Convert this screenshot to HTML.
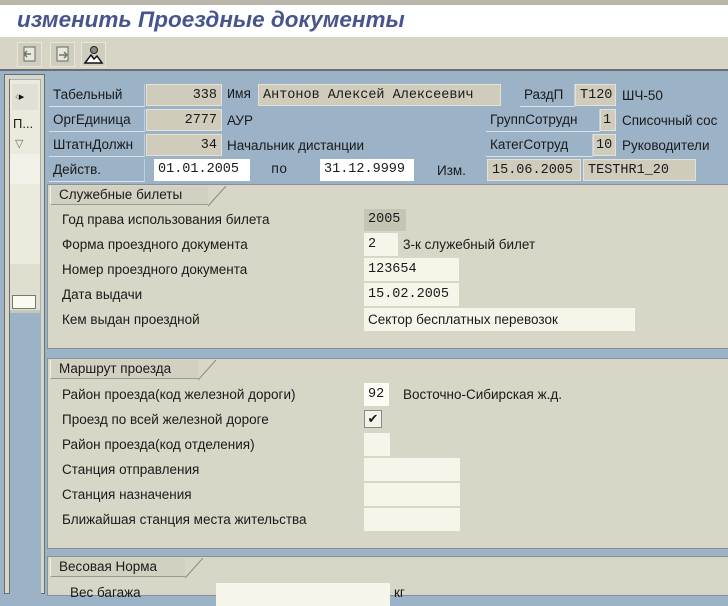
<!DOCTYPE html>
<html><head><meta charset="utf-8"><style>
*{margin:0;padding:0;box-sizing:border-box}
body{width:728px;height:594px;overflow:hidden;background:#9cb2c6;position:relative;font-family:"Liberation Sans","DejaVu Sans",sans-serif;font-size:13.5px;color:#1a1a1a}
.a{position:absolute;white-space:nowrap}
.m{font-family:"Liberation Mono","DejaVu Sans Mono",monospace;font-size:13.5px}
.lbl{position:absolute;height:23px;line-height:22px;padding-left:4px;border-bottom:1px solid #d8e2ea;border-right:1px solid #c0cfdb}
.g{position:absolute;background:#cfccbc;height:22px;line-height:22px;padding:0 4px;border:1px solid #e4e2d6}
.w{position:absolute;background:#fbfaf0;height:22px;line-height:22px;padding:0 4px}
.wg{position:absolute;background:#f7f5ea;height:23px;line-height:23px;padding:0 4px}
.grp{position:absolute;left:47px;right:0;background:#d8d6c6;border:1px solid #8a9098;border-right:none}
.tab{position:absolute;left:2px;top:1px;height:19px;line-height:18px;padding-left:8px;background:#d2d0c0;border-bottom:1px solid #9a9a90;border-left:1px solid #f0efe6}
.sl{position:absolute;top:1px}
.row{position:absolute;left:14px;white-space:nowrap}
</style></head><body>
<div class="a" style="left:0;top:0;width:728px;height:5px;background:#b8b6a8"></div>
<div class="a" style="left:0;top:5px;width:728px;height:32px;background:#fff"></div>
<div class="a" style="left:17px;top:7px;font-size:22.5px;font-weight:bold;font-style:italic;color:#47558f">изменить Проездные документы</div>
<div class="a" style="left:0;top:37px;width:728px;height:34px;background:#d7d5c6;border-bottom:2px solid #6a6e72"></div>
<div class="a" style="left:17px;top:42px;width:25px;height:25px;background:#cfcdbd;border:1px solid #e8e6da"><svg width="23" height="23"><rect x="6" y="4" width="11" height="14" fill="#e8e8e0" stroke="#6a6a60"/><path d="M6 11h7M6 11l3-3M6 11l3 3" stroke="#6a7a60" stroke-width="1.5" fill="none"/></svg></div>
<div class="a" style="left:50px;top:42px;width:25px;height:25px;background:#cfcdbd;border:1px solid #e8e6da"><svg width="23" height="23"><rect x="6" y="4" width="11" height="14" fill="#e8e8e0" stroke="#6a6a60"/><path d="M8 12h8M16 12l-3-3M16 12l-3 3" stroke="#6a7a60" stroke-width="1.5" fill="none"/></svg></div>
<div class="a" style="left:81px;top:42px;width:25px;height:25px;background:#cfcdbd;border:1px solid #e8e6da"><svg width="23" height="23"><circle cx="12" cy="7" r="3.5" fill="#888" stroke="#222"/><path d="M3 20l6-8 3 4 3-3 5 7z" fill="#fff" stroke="#111" stroke-width="1.5"/></svg></div>
<!-- left panel -->
<div class="a" style="left:4px;top:74px;width:41px;height:520px;background:#d8d6c6;border:1px solid #6a6e72"></div>
<div class="a" style="left:9px;top:79px;width:32px;height:515px;background:#9cb2c6;border-left:1px solid #6a6e72"></div>
<div class="a" style="left:10px;top:80px;width:30px;height:232px;background:#eceadc"></div>
<div class="a" style="left:12px;top:84px;width:26px;height:26px;background:#e2e0d4;font-size:11px;line-height:26px;color:#999">&nbsp;‹<span style="color:#111">▸</span></div>
<div class="a" style="left:10px;top:112px;width:30px;height:24px;line-height:24px;font-size:13px;padding-left:3px">П...</div>
<div class="a" style="left:10px;top:136px;width:30px;height:18px;font-size:11px;line-height:16px;color:#666;padding-left:5px">▽</div>
<div class="a" style="left:10px;top:154px;width:30px;height:30px;background:#f2f1e8"></div>
<div class="a" style="left:10px;top:264px;width:30px;height:46px;background:#e0decf"></div>
<div class="a" style="left:12px;top:295px;width:24px;height:14px;background:#fbfaf2;border:1px solid #777"></div>
<div class="a" style="left:10px;top:310px;width:30px;height:3px;background:#c8c6b8"></div>
<!-- header -->
<div class="lbl" style="left:49px;top:84px;width:96px">Табельный</div>
<div class="g m" style="left:146px;top:84px;width:76px;text-align:right">338</div>
<div class="a m" style="left:227px;top:88px">Имя</div>
<div class="g m" style="left:258px;top:84px;width:243px">Антонов Алексей Алексеевич</div>
<div class="lbl" style="left:520px;top:84px;width:55px">РаздП</div>
<div class="g m" style="left:575px;top:84px;width:41px">T120</div>
<div class="a" style="left:622px;top:88px">ШЧ-50</div>
<div class="lbl" style="left:49px;top:109px;width:96px">ОргЕдиница</div>
<div class="g m" style="left:146px;top:109px;width:76px;text-align:right">2777</div>
<div class="a" style="left:227px;top:113px">АУР</div>
<div class="lbl" style="left:486px;top:109px;width:114px">ГруппСотрудн</div>
<div class="g m" style="left:600px;top:109px;width:16px;padding:0 2px">1</div>
<div class="a" style="left:622px;top:113px">Списочный сос</div>
<div class="lbl" style="left:49px;top:134px;width:96px">ШтатнДолжн</div>
<div class="g m" style="left:146px;top:134px;width:76px;text-align:right">34</div>
<div class="a" style="left:227px;top:138px">Начальник дистанции</div>
<div class="lbl" style="left:486px;top:134px;width:107px">КатегСотруд</div>
<div class="g m" style="left:593px;top:134px;width:23px;padding:0 2px">10</div>
<div class="a" style="left:622px;top:138px">Руководители</div>
<div class="lbl" style="left:49px;top:159px;width:96px">Действ.</div>
<div class="w m" style="left:154px;top:159px;width:96px;background:#fff">01.01.2005</div>
<div class="a m" style="left:271px;top:163px">по</div>
<div class="w m" style="left:320px;top:159px;width:94px;background:#fff">31.12.9999</div>
<div class="a" style="left:437px;top:163px">Изм.</div>
<div class="g m" style="left:487px;top:159px;width:94px">15.06.2005</div>
<div class="g m" style="left:583px;top:159px;width:113px">TESTHR1_20</div>
<!-- group 1 -->
<div class="grp" style="top:184px;height:165px">
<div class="tab" style="width:158px">Служебные билеты</div>
<svg class="sl" style="left:160px" width="20" height="21"><path d="M0 20L18 0" stroke="#8a8a80" fill="none"/></svg>
<div class="row" style="top:27px">Год права использования билета</div>
<div class="row" style="top:52px">Форма проездного документа</div>
<div class="row" style="top:77px">Номер проездного документа</div>
<div class="row" style="top:102px">Дата выдачи</div>
<div class="row" style="top:127px">Кем выдан проездной</div>
<div class="g m" style="left:316px;top:24px;width:42px;border:none;background:#c6c4b4">2005</div>
<div class="wg m" style="left:316px;top:48px;width:34px">2</div>
<div class="a" style="left:355px;top:52px">3-к служебный билет</div>
<div class="wg m" style="left:316px;top:73px;width:95px">123654</div>
<div class="wg m" style="left:316px;top:98px;width:95px">15.02.2005</div>
<div class="wg" style="left:316px;top:123px;width:271px">Сектор бесплатных перевозок</div>
</div>
<!-- group 2 -->
<div class="grp" style="top:358px;height:191px">
<div class="tab" style="width:148px">Маршрут проезда</div>
<svg class="sl" style="left:150px" width="20" height="21"><path d="M0 20L18 0" stroke="#8a8a80" fill="none"/></svg>
<div class="row" style="top:28px">Район проезда(код железной дороги)</div>
<div class="row" style="top:53px">Проезд по всей железной дороге</div>
<div class="row" style="top:78px">Район проезда(код отделения)</div>
<div class="row" style="top:103px">Станция отправления</div>
<div class="row" style="top:128px">Станция назначения</div>
<div class="row" style="top:153px">Ближайшая станция места жительства</div>
<div class="wg m" style="left:316px;top:24px;width:25px;background:#fdfcf4">92</div>
<div class="a" style="left:355px;top:28px">Восточно-Сибирская ж.д.</div>
<div class="a" style="left:316px;top:51px;width:18px;height:18px;background:#f4f3ea;border:1px solid #888;font-size:13px;line-height:16px;text-align:center;font-weight:bold">✔</div>
<div class="wg" style="left:316px;top:74px;width:26px"></div>
<div class="wg" style="left:316px;top:99px;width:96px"></div>
<div class="wg" style="left:316px;top:124px;width:96px"></div>
<div class="wg" style="left:316px;top:149px;width:96px"></div>
</div>
<!-- group 3 -->
<div class="grp" style="top:556px;height:40px">
<div class="tab" style="width:135px">Весовая Норма</div>
<svg class="sl" style="left:137px" width="20" height="21"><path d="M0 20L18 0" stroke="#8a8a80" fill="none"/></svg>
<div class="row" style="top:28px;left:22px">Вес багажа</div>
<div class="wg" style="left:168px;top:26px;width:174px"></div>
<div class="a" style="left:346px;top:28px">кг</div>
</div>
</body></html>
